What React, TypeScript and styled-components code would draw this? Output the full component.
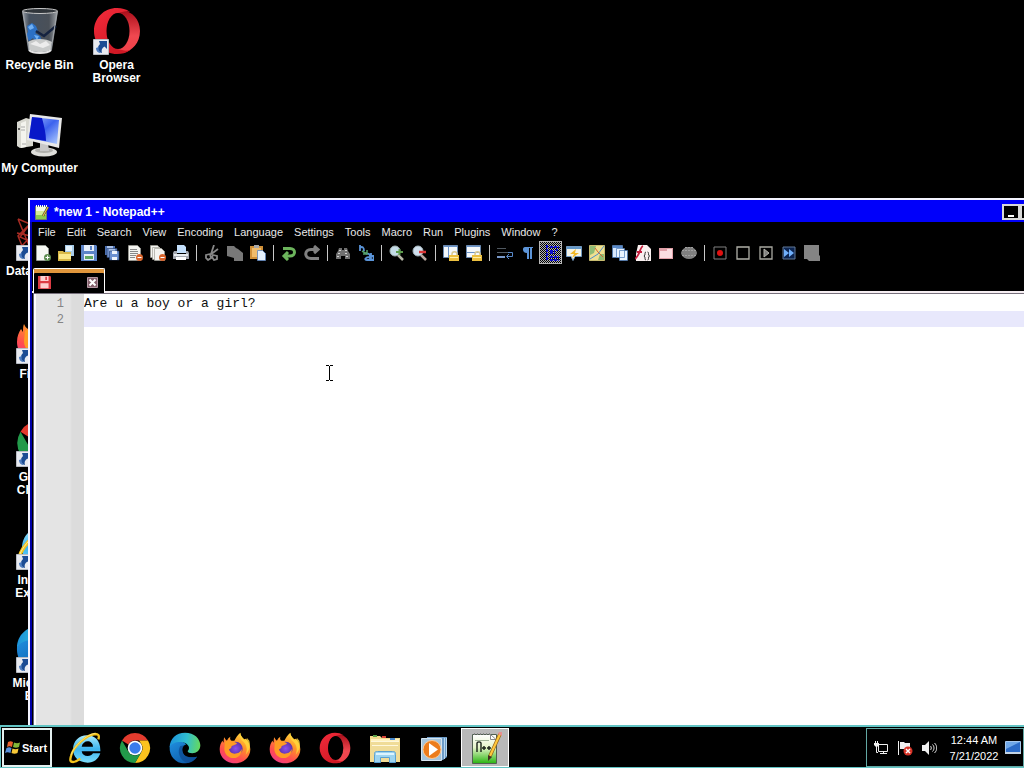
import React from "react";
import styled, { createGlobalStyle, css } from "styled-components";

const UI_FONT = '"Liberation Sans", Arial, sans-serif';
const MONO_FONT = '"Liberation Mono", "Courier New", monospace';

const GlobalStyle = createGlobalStyle`
  * { box-sizing: border-box; }
  body { margin: 0; background: #000; font-family: ${UI_FONT}; }
  button { font: inherit; color: inherit; background: none; border: 0; padding: 0; margin: 0; }
  svg { display: block; flex: none; }
`;

/* ---------- layout ---------- */

const Screen = styled.div`
  height: 100vh;
  display: flex;
  flex-direction: column;
  overflow: hidden;
  background: #000;
  color: #fff;
`;

const Desktop = styled.main`
  position: relative;
  flex: 1;
  min-height: 0;
  overflow: hidden;
`;

const IconGrid = styled.div`
  display: grid;
  grid-auto-flow: column;
  grid-template-rows: repeat(7, 103px);
  grid-auto-columns: 77px;
  padding-left: 1px;
`;

const Shortcut = styled.button<{ $start?: boolean }>`
  display: flex;
  flex-direction: column;
  align-items: center;
  justify-content: flex-start;
  gap: 4px;
  padding-top: 7px;
  font-size: 12px;
  line-height: 13px;
  font-weight: 700;
  white-space: pre;
  text-align: center;
  & > span:last-child {
    align-self: ${(p) => (p.$start ? "flex-start" : "center")};
    padding-left: ${(p) => (p.$start ? "5px" : "0")};
  }
`;

const Picture = styled.span`
  position: relative;
  width: 48px;
  height: 48px;
`;

const Overlay = styled.span`
  position: absolute;
  left: 0;
  bottom: 0;
`;

const Window = styled.section`
  position: absolute;
  left: 28px;
  top: 198px;
  right: -36px;
  bottom: 0;
  display: flex;
  flex-direction: column;
  background: #000;
  border-left: 2px solid #f4f4ff;
  border-top: 2px solid #f4f4ff;
  box-shadow: inset 2px 0 0 #0000a8;
  padding-left: 2px;
`;

const TitleBar = styled.header`
  display: flex;
  align-items: center;
  height: 22px;
  margin-left: -2px;
  padding: 2px 4px 0 4px;
  gap: 4px;
  background: #0000fa;
`;

const Title = styled.h1`
  flex: 1;
  margin: 0;
  font-size: 12px;
  line-height: 16px;
  font-weight: 700;
  white-space: pre;
`;

const Controls = styled.div`
  display: flex;
`;

const ControlButton = styled.button`
  width: 18px;
  height: 16px;
  background: #000;
  border: 2px solid #d8d8d8;
  display: flex;
  justify-content: center;
  align-items: flex-end;
`;

const MenuBar = styled.nav`
  display: flex;
  gap: 11px;
  height: 19px;
  padding-left: 6px;
  font-size: 11px;
  line-height: 20px;
  color: #e8e8e8;
`;

const ToolBar = styled.div`
  display: flex;
  align-items: center;
  height: 23px;
  margin-left: -1px;
`;

const Tool = styled.button<{ $pressed?: boolean }>`
  width: 23px;
  height: 23px;
  display: flex;
  align-items: center;
  justify-content: center;
  ${(p) =>
    p.$pressed &&
    css`
      border: 1px solid #b8b8b8;
      background: repeating-conic-gradient(#b4b4b4 0% 25%, #000 0% 50%) 0 0 / 2px 2px;
    `}
`;

const Separator = styled.span`
  width: 8px;
  height: 16px;
  display: flex;
  justify-content: center;
  &::before {
    content: "";
    width: 1px;
    background: #c8c8c8;
  }
`;

const TabStrip = styled.div`
  display: flex;
  align-items: flex-end;
  height: 29px;
  padding-left: 1px;
  border-bottom: 2px solid #f6eef2;
`;

const Tab = styled.div`
  width: 72px;
  height: 25px;
  margin-bottom: -2px;
  display: flex;
  align-items: center;
  justify-content: space-between;
  padding: 0 6px 0 4px;
  background: #000;
  border: solid #fff;
  border-width: 1px 1px 0;
  border-radius: 2px 2px 0 0;
  box-shadow: inset 0 4px 0 #e0963c;
  & svg { margin-top: 2px; }
`;

const Editor = styled.div`
  flex: 1;
  min-height: 0;
  display: flex;
  margin-left: 1px;
  border-top: 1px solid #77707c;
  border-left: 1px solid #606080;
  background: #fff;
  padding-left: 2px;
`;

const Gutter = styled.div`
  width: 48px;
  padding: 2px 20px 0 0;
  background: linear-gradient(90deg, #e4e4e4 0 34px, #dcdcdc 36px);
  color: #848484;
  font-family: ${MONO_FONT};
  font-size: 12px;
  line-height: 16px;
  text-align: right;
`;

const Code = styled.textarea`
  flex: 1;
  border: 0;
  outline: 0;
  resize: none;
  margin: 0;
  padding: 2px 0 0;
  background: linear-gradient(#e8e8fc, #e8e8fc) 0 17px / 100% 16px no-repeat #fff;
  color: #101010;
  font-family: ${MONO_FONT};
  font-size: 13px;
  line-height: 16px;
`;

const Pointer = styled.span`
  position: absolute;
  left: 325px;
  top: 365px;
`;

const TaskBar = styled.footer`
  display: flex;
  align-items: stretch;
  height: 43px;
  padding: 1px 0 0 1px;
  border: solid #62c4c4;
  border-width: 2px 0 1px 1px;
`;

const StartButton = styled.button`
  width: 50px;
  border: 2px solid #e4f0f0;
  display: flex;
  align-items: center;
  gap: 2px;
  padding-left: 1px;
  font-size: 11px;
  font-weight: 700;
`;

const Pinned = styled.div`
  display: flex;
  flex: 1;
  gap: 2px;
  padding-left: 9px;
`;

const TaskButton = styled.button<{ $active?: boolean }>`
  width: 48px;
  display: flex;
  align-items: center;
  justify-content: center;
  background: ${(p) => (p.$active ? "#b9b9b9" : "none")};
  border: ${(p) => (p.$active ? "1px solid #fff" : "0")};
`;

const Tray = styled.div`
  display: flex;
  align-items: center;
  gap: 8px;
  border: 1px solid #62a8a4;
  padding: 0 2px 0 6px;
`;

const Clock = styled.time`
  width: 54px;
  font-size: 11px;
  line-height: 16px;
  text-align: center;
  margin: 0 -4px 0 2px;
`;

/* ---------- large icons ---------- */

const HiddenDefs = styled.svg`
  position: absolute;
`;

const SharedGradients = () => (
  <HiddenDefs width="0" height="0" aria-hidden="true">
    <defs>
      <linearGradient id="opera" x1="0" y1="0" x2="0.6" y2="1">
        <stop offset="0" stopColor="#f42c3c" />
        <stop offset="1" stopColor="#d01824" />
      </linearGradient>
      <linearGradient id="operaIn" x1="0" y1="0" x2="0" y2="1">
        <stop offset="0" stopColor="#a80c18" />
        <stop offset="0.6" stopColor="#f04850" />
        <stop offset="1" stopColor="#f04048" />
      </linearGradient>
      <linearGradient id="glass" x1="0" y1="0" x2="1" y2="0">
        <stop offset="0" stopColor="#9aa0a8" />
        <stop offset="0.2" stopColor="#45505e" />
        <stop offset="0.75" stopColor="#4a5058" />
        <stop offset="1" stopColor="#a4a8ac" />
      </linearGradient>
      <linearGradient id="screen" x1="0" y1="0" x2="1" y2="1">
        <stop offset="0" stopColor="#a8c0ff" />
        <stop offset="0.5" stopColor="#3c62ee" />
        <stop offset="1" stopColor="#b4d0ff" />
      </linearGradient>
      <linearGradient id="ie" x1="0" y1="0" x2="0" y2="1">
        <stop offset="0" stopColor="#a8ecff" />
        <stop offset="0.5" stopColor="#3cb4ee" />
        <stop offset="1" stopColor="#7adcfa" />
      </linearGradient>
      <linearGradient id="edgeTop" x1="0" y1="0.3" x2="1" y2="0.4">
        <stop offset="0" stopColor="#1c92dc" />
        <stop offset="0.55" stopColor="#30bed0" />
        <stop offset="1" stopColor="#64d860" />
      </linearGradient>
      <linearGradient id="edgeLow" x1="0" y1="0" x2="0.8" y2="1">
        <stop offset="0" stopColor="#2090e0" />
        <stop offset="1" stopColor="#0c58a4" />
      </linearGradient>
      <linearGradient id="fox" x1="0.85" y1="0" x2="0.3" y2="1">
        <stop offset="0" stopColor="#ffe944" />
        <stop offset="0.4" stopColor="#ff9328" />
        <stop offset="0.75" stopColor="#ff4c50" />
        <stop offset="1" stopColor="#f03c80" />
      </linearGradient>
      <radialGradient id="globe">
        <stop offset="0" stopColor="#8a50f0" />
        <stop offset="1" stopColor="#5b30a8" />
      </radialGradient>
      <linearGradient id="npp" x1="0" y1="0" x2="0" y2="1">
        <stop offset="0" stopColor="#fff" />
        <stop offset="0.45" stopColor="#e4f4c8" />
        <stop offset="1" stopColor="#28b410" />
      </linearGradient>
    </defs>
  </HiddenDefs>
);

type Sized = { size: number };

const Opera = ({ size }: Sized) => (
  <svg width={size} height={size} viewBox="0 0 48 48">
    <path fill="url(#operaIn)" d="M30 3c9 2 17 9 17 21s-8 20-17 22l-10-4 12-6 4-12-4-12-12-6z" />
    <path fillRule="evenodd" fill="url(#opera)" d="M24 1C11 1 1 11 1 24s10 23 23 23c5 0 9-1 13-4-3 1-5 1-8 0-9-1-15-8-15-19S20 6 29 5c3-1 5-1 8 0-4-3-8-4-13-4z" />
    <ellipse cx="25" cy="24" rx="11.500" ry="18" fill="#000" />
  </svg>
);

const Chrome = ({ size }: Sized) => (
  <svg width={size} height={size} viewBox="0 0 48 48">
    <path fill="#e33b2e" d="M4.500 12.700A22.500 22.500 0 0 1 43.500 12.700H24a11.300 11.300 0 0 0-10 6z" />
    <path fill="#fcc31e" d="M43.500 12.700A22.500 22.500 0 0 1 24 46.500l9.800-16.900a11.300 11.300 0 0 0 0-11.300L30 12.700z" />
    <path fill="#229a4a" d="M24 46.500A22.500 22.500 0 0 1 4.500 12.700l9.700 16.900A11.300 11.300 0 0 0 28 34.600l5-3.500z" />
    <circle cx="24" cy="24" r="11" fill="#fff" />
    <circle cx="24" cy="24" r="8.500" fill="#3a7cec" />
  </svg>
);

const Edge = ({ size }: Sized) => (
  <svg width={size} height={size} viewBox="0 0 48 48">
    <path fill="url(#edgeLow)" d="M1 22C3 12 20 11 26 19c-4 0-7 4-6 9 1 8 9 12 22 9-4 6-11 10-19 10C10 47 0 36 1 22z" />
    <path fill="#0d4c94" d="M17 21c-5 7-2 21 10 25.500 6-.5 12-4 15-9.500-13 3-22-2-22-9 0-4 1-6 3-8z" opacity=".75" />
    <path fill="url(#edgeTop)" d="M1 23C1 10 11 1 24 1c14 0 23 9 23 19 0 8-6 12-12 12-4 0-7-1-7-3 0-1 2-2 2-5 0-5-6-9-13-9C9 15 3 18 1 23z" />
  </svg>
);

const Firefox = ({ size }: Sized) => (
  <svg width={size} height={size} viewBox="0 0 48 48">
    <path fill="url(#fox)" d="M8 8c1 2 2 4 4 5 1-3 3-5 5-6-1 3 0 5 2 6h4c2-4 5-9 9-12 0 4 3 7 6 10l2-1c4 4 7 10 7 16 0 12-10 21-23 21S1 38 1 26c0-6 2-10 4-13 1 1 1 2 2 3 0-3 0-6 1-8z" />
    <circle cx="25" cy="25" r="10.500" fill="url(#globe)" />
    <path fill="#ff9c24" d="M9 15c3-3 8-3 12 0 3 0 5 1 6 2-1 2-5 3-8 4 0 3-2 4-4 5 1 5 6 8 12 6 4-1 6-4 7-7 1 8-5 14-12 14-8 0-14-6-14-14z" />
    <path fill="#ffd83c" d="M32 1c-2 5 0 9 4 13 6 6 7 13 4 20 6-6 8-15 5-22-1 0-2-2-3-3l-2 4c-4-3-8-7-8-12z" opacity=".8" />
  </svg>
);

const Explorer = ({ size }: Sized) => (
  <svg width={size} height={size} viewBox="0 0 48 48">
    <path fillRule="evenodd" fill="url(#ie)" d="M27 5c12 0 20 8 20 22v2H19c1 5 4 7 9 7 4 0 6-1 8-4h11c-3 9-10 14-19 14C15 46 6 38 6 26S15 5 27 5zM19 22h17c0-5-4-8-8-8s-8 3-9 8z" />
    <path fill="none" stroke="#f4c41c" strokeWidth="3.500" d="M44 11c2-6 0-8-5-8C27 4 6 22 3 36c-2 7-1 9 3 9 3 0 7-2 11-5" />
    <path fill="none" stroke="#fff0a0" strokeWidth="1" d="M40 2C28 2 6 22 3 35" />
  </svg>
);

const RecycleBin = () => (
  <svg width="48" height="48" viewBox="0 0 48 48">
    <path fill="url(#glass)" d="M6 4h36l-6 39c-1 3-21 4-24 0z" />
    <path fill="#2c70c4" d="M11 19l5-3 4 3 2 5-3 2 5 3 2 5-6 2-3-5-4 3-3-6 2-3z" />
    <path stroke="#152340" strokeWidth="2.500" d="M40 19 28 29l-8-5" fill="none" />
    <path fill="#6fb0f4" d="m12 20 4-3 2 4-4 2zM18 28l5 1-2 4z" />
    <path fill="#c8caca" d="M12 35c5-4 18-4 24 0l-1 7c-2 4-20 4-22 0z" />
    <path fill="#ececec" d="m14 37 6-3 4 3 6-3 4 4-7 3z" />
    <path fill="none" stroke="#a0a4a8" d="m7 5 6 38M41 5l-6 38" />
    <ellipse cx="24" cy="4" rx="17.500" ry="2.500" fill="#30353a" stroke="#c8c8c8" />
    <path fill="none" stroke="#e4e4e4" strokeWidth="2" d="M13 43c4 4 18 4 22 0" />
  </svg>
);

const Computer = () => (
  <svg width="48" height="48" viewBox="0 0 48 48">
    <path fill="#d8d8d0" d="m1 12 9-4 7 2v26L4 38 1 36z" />
    <path fill="#f4f4ee" d="m5 13 5-2v26l-5 1z" />
    <path stroke="#aaa" d="M5 17h4M5 20h4M6 34h4" />
    <circle cx="3" cy="19" r="1" fill="#333" />
    <ellipse cx="28" cy="42" rx="13" ry="4.500" fill="#dededa" />
    <ellipse cx="28" cy="40.500" rx="9" ry="2.500" fill="#b0b0ac" />
    <path fill="#c8c8c8" d="m24 32 8 1 1 8h-9z" />
    <path fill="#e8e8e8" d="m14 4 32 4-3 30-32-8z" />
    <path fill="url(#screen)" d="m16 7 27 3-2 24-28-6z" />
    <path fill="#0818c8" d="m16 7 10 1c2 8 4 15 4 23l-17-3z" />
  </svg>
);

const Web = () => (
  <svg width="48" height="48" viewBox="0 0 48 48">
    <path fill="none" stroke="#a82c24" strokeWidth="1.500" d="M2 6l12 5 22-8 8 20-7 20-28-3-7-17L14 11l3 27M2 6l12 29M14 11 4 24l20 9 20-10M1 20l14 3L4 35" />
  </svg>
);

const ShortcutArrow = () => (
  <svg width="16" height="16" viewBox="0 0 16 16">
    <path fill="#e8eaf0" stroke="#b8bcc4" d="M.5.500h15v15H.500z" />
    <path fill="#1c4c94" d="M6 2h8v8l-2.500-2.500C9 9 8 11 9 14c-4-1-6-5-2-9z" />
    <path fill="#4d7cc0" d="M3 9c0 3 2 5 5 5-2-1-3-4-2-6z" />
  </svg>
);

const Folder = () => (
  <svg width="34" height="34" viewBox="0 0 34 34">
    <path fill="#f2dc90" d="M2 5h10l2 2h18v24H2z" />
    <path fill="#fff2c0" d="M3 8h28v21H3z" />
    <path fill="#58a048" d="M5 4h4v2H5z" />
    <path fill="#d84438" d="M14 5h4v2h-4z" />
    <path fill="#4888cc" d="M22 7h5v2h-5z" />
    <path fill="#f0dc98" d="M3 11h28v19H3z" />
    <path stroke="#fff8dc" d="M3 10.500h28M4 14.500h26" />
    <path fill="#9cd4f0" stroke="#5aa0d0" d="M6.500 31.500v-8c0-3 1-3 3-3h15c3 0 3 1 3 3v8h-6v-5h-9v5z" />
    <path fill="#dcf4ff" d="M8 22h18v2H8z" />
  </svg>
);

const MediaPlayer = () => (
  <svg width="34" height="34" viewBox="0 0 34 34">
    <path fill="#6d9cc8" d="M9 6h20v20l-4 3H9z" />
    <path stroke="#b8d8f0" d="M26.500 7v21M28.500 7v18" />
    <path fill="#a4c4dc" stroke="#d4e4f0" d="M3.500 7.500h20v22h-20z" />
    <circle cx="14" cy="18.500" r="9" fill="#ec7c1c" stroke="#ffc890" />
    <path fill="#fff" d="m11 12 9 6.500L11 25z" />
  </svg>
);

const NotepadPlus = ({ size }: Sized) => (
  <svg width={size} height={size} viewBox="0 0 34 34">
    <path fill="url(#npp)" stroke="#506050" d="M4.500 3.500h24v29h-24z" />
    <path fill="#fff" stroke="#888" d="M22.500 3.500 28 8.500h-5.500z" />
    <path stroke="#888" strokeDasharray="1 2" strokeWidth="2" d="M6 3h18" />
    <path stroke="#a0b498" d="M7 9.500h14" />
    <path fill="none" stroke="#182018" strokeWidth="1.400" d="M9 21v-9c0-1.500 4-1.500 4 0v9M14 17h4M16 15v4M19 17h4M21 15v4" />
    <path stroke="#8c5c14" strokeWidth="3.500" d="M32 3 22 25" />
    <path stroke="#ffc83c" strokeWidth="2.200" d="M32 3 22 25" />
    <path fill="#443020" d="m20 24 4 2-4 4z" />
    <path fill="#e89090" d="m30 3 1-2h3v4z" />
  </svg>
);

/* Title-bar sized page and pencil, simplified so it stays legible at 16px. */
const NotepadSmall = () => (
  <svg width="16" height="16" viewBox="0 0 16 16">
    <path fill="#f4f8e8" stroke="#708068" d="M1.500 2.500h11v13h-11z" />
    <path fill="#d4ec98" d="M2 7h10v4H2z" />
    <path fill="#8ccc50" d="M2 11h10v4H2z" />
    <path stroke="#fff" strokeDasharray="1 1" strokeWidth="2" d="M2 2h11" />
    <path stroke="#404838" strokeWidth="2.500" d="m14 3-5 9" />
    <path stroke="#f0c040" strokeWidth="1.200" d="m14 3-5 9" />
  </svg>
);

const WindowsFlag = () => (
  <svg width="15" height="16" viewBox="0 0 15 16">
    <path fill="#e8602c" d="M3 2c2-1 3-1 5 0L7 7C5 6 4 6 2 7z" />
    <path fill="#84b838" d="M9 2.500c2 1 4 1 6 0L14 7c-2 1-4 1-6 0z" />
    <path fill="#5890dc" d="M1.500 8c2-1 3-1 5 0l-1 5c-2-1-4-1-5.500 0z" />
    <path fill="#f6c838" d="M7.500 8.500c2 1 4 1 6 0l-1 4.500c-2 1-4 1-6 0z" />
  </svg>
);

/* ---------- toolbar icons ---------- */

const Disk = ({ fill = "#5c84c8", light = "#e8f0fa" }: { fill?: string; light?: string }) => (
  <>
    <path fill={fill} d="M0 0h15l1 1v15H0z" />
    <path fill={light} d="M3 0h10v6H3zM3 9h10v6H3z" />
    <path fill={fill} d="M9 1h2v4H9z" />
  </>
);

const Page = ({ x, y }: { x: number; y: number }) => (
  <path transform={`translate(${x} ${y})`} fill="#f4f4f0" stroke="#a0a098" strokeWidth=".7" d="M.5.500h7l3 3v9H.500z" />
);

const CloseMark = () => (
  <>
    <circle cx="12.500" cy="12.500" r="3.500" fill="#d8642c" />
    <path stroke="#fff" d="M10.500 12.500h4" />
  </>
);

const Lock = () => (
  <>
    <path fill="none" stroke="#d8c890" strokeWidth="1.500" d="M9 11V9c0-3 5-3 5 0v2" />
    <path fill="#ecc040" d="M6 10h10v6H6z" />
    <path fill="#fff0a8" d="M7 12h8v1H7z" />
  </>
);

const tools: Record<string, React.ReactNode> = {
  New: (
    <>
      <path fill="#f6f8f4" stroke="#a8b0a8" strokeWidth=".6" d="M1.500.500h9l3 3v12h-12z" />
      <circle cx="12.500" cy="12.500" r="3.500" fill="#5c8c50" />
      <path stroke="#fff" d="M10.500 12.500h4M12.500 10.500v4" />
    </>
  ),
  Open: (
    <>
      <path fill="#a8cce8" d="M7 0h9v11H7z" />
      <path fill="#e4f2fc" d="M8 1h6v5H8z" />
      <path fill="#d8b848" d="M0 6h5l1 1h7v9H0z" />
      <path fill="#fae88c" d="M1 9h12v5H1z" />
    </>
  ),
  Save: (
    <>
      <Disk />
      <path fill="#60a860" d="M4 11h8v3H4z" />
    </>
  ),
  "Save all": (
    <>
      <path fill="#4c70b0" d="M1 1h10v9H1z" />
      <path fill="#a8c0e8" d="M3 1h6v3H3z" />
      <path fill="#6c8cc8" stroke="#28406c" strokeWidth=".6" d="M3 3.500h10v9H3z" />
      <path fill="#a8c0e8" d="M5 4h6v3H5z" />
      <path fill="#6c90d0" stroke="#28406c" strokeWidth=".6" d="M5.500 6h9.500v9H5.500z" />
      <path fill="#f0f4fc" d="M8 6h5v3H8zM8 12h5v3H8z" />
    </>
  ),
  Close: (
    <>
      <path fill="#f4f4f0" stroke="#a8a8a0" strokeWidth=".6" d="M1.500.500h9l3 3v12h-12z" />
      <path stroke="#888" d="M3 4.500h7M3 6.500h8M3 8.500h8M3 10.500h6M3 12.500h5" />
      <CloseMark />
    </>
  ),
  "Close all": (
    <>
      <Page x={0} y={0} />
      <Page x={2} y={2} />
      <Page x={4} y={3} />
      <CloseMark />
    </>
  ),
  Print: (
    <>
      <path fill="#c4e0fc" d="M4 0h7l2 2v6H4z" />
      <path fill="#a4a8b0" d="M1 6h3v3h9V6h2l1 2v6H0V8z" />
      <path fill="#e8ecf0" d="M1 9h14v2H1z" />
      <path fill="#fff" d="M3 12h10v3H3z" />
    </>
  ),
  Cut: (
    <path fill="none" stroke="#888" strokeWidth="1.800" d="M10 0 7 9M14 4 6 10M2 10l4-1 1 4-3 2-2-2zM9 10l4 1v3l-3 1-2-3z" />
  ),
  Copy: <path fill="#787878" d="M0 1h7l2 2 2 1 5 4v8H7v-3L0 11z" />,
  Paste: (
    <>
      <path fill="#d09038" d="M0 1h13v13H0z" />
      <path fill="#f0bc6c" d="M2 3h9v9H2z" />
      <path fill="#a8a8a8" d="M4 0h5v3H4z" />
      <path fill="#e4f0fc" stroke="#5c84bc" strokeWidth=".8" d="M7.500 5.500h5l3 3v7h-8z" />
    </>
  ),
  Undo: <path fill="none" stroke="#6cb45c" strokeWidth="3" d="M2 3.500h7c6 0 6 7.500 0 7.500H5M7 7 3 11l4 4" />,
  Redo: <path fill="none" stroke="#808080" strokeWidth="3" d="M14 4.500H7c-7 0-7 9 0 9h8M10 1l4 3.500L10 8" />,
  Find: (
    <>
      <path fill="#707070" d="M4 3h3v2h2V3h3l1 3 2 3v5h-5v-3H6v3H1V9l2-3z" />
      <path stroke="#d0d0d0" strokeDasharray="2 1" d="M3 8.500h3M10 8.500h3M4 5.500h2M10 5.500h2M2 11.500h3M11 11.500h3" />
    </>
  ),
  Replace: (
    <>
      <path fill="none" stroke="#5a94d8" strokeWidth="1.800" d="M2 0v6M2 3c2-2 4-1 4 3M8 9c2-1 4 0 4 2v4H9c-3 0-2-3 3-3M13 8v7h2.500v-4H13" />
      <path fill="none" stroke="#54a06c" strokeWidth="1.500" d="m4 6 5 3M9 5v4H5" />
    </>
  ),
  "Zoom in": (
    <>
      <path stroke="#b8b8a8" strokeWidth="2.500" d="m9 10 5 5" />
      <circle cx="6" cy="6" r="5" fill="#c4dce8" stroke="#a4b4b4" />
      <path stroke="#5c9c4c" strokeWidth="2" d="M7 7h7M10.500 4v6" />
    </>
  ),
  "Zoom out": (
    <>
      <path stroke="#b8a8a0" strokeWidth="2.500" d="m9 10 5 5" />
      <circle cx="6" cy="6" r="5" fill="#d0e0ee" stroke="#a4b4bc" />
      <path stroke="#dc3838" strokeWidth="2.500" d="M7 7h7" />
    </>
  ),
  "Sync vertical": (
    <>
      <path fill="#f4f8fc" stroke="#6888b0" d="M.5.500h14v12H.500z" />
      <path stroke="#6c94c8" d="M1 1.500h13M5.500 2v10" />
      <Lock />
    </>
  ),
  "Sync horizontal": (
    <>
      <path fill="#f4f8fc" stroke="#6888b0" d="M.5.500h14v12H.500z" />
      <path stroke="#6c94c8" d="M1 1.500h13M1 7.500h13" />
      <Lock />
    </>
  ),
  "Word wrap": (
    <>
      <path stroke="#505860" d="M0 3.500h9M0 7.500h11" />
      <path stroke="#7898c8" strokeWidth="2" d="M0 12h8" />
      <path fill="none" stroke="#5888c8" d="M11 7.500h4.500v4H10M12 9l-2.500 2.500L12 14" />
    </>
  ),
  "Show all": <path fill="#5c94d8" d="M5 2h8v1h-1v11h-2V3H9v11H7V8C2 8 2 2 5 2z" />,
  Indent: <path fill="none" stroke="#0c0cd0" strokeWidth="2" strokeDasharray="3 1" d="M4 0v16M7 2h9M7 6h5M7 8h5M7 12h9M7 15h9M14 4v2" />,
  Language: (
    <>
      <path fill="#f4f4e8" stroke="#7098c0" d="M.5 1.500h15v10H9l-2 4-2-4H.500z" />
      <path fill="#6498c8" d="M1 2h14v2H1z" />
      <path fill="#f0b828" d="m10 4-6 5h4l-2 4 7-5H9z" />
    </>
  ),
  Map: (
    <>
      <path fill="#f0e090" stroke="#c8bc70" d="M.5.500h15v15H.500z" />
      <path fill="#90bc74" d="M1 1h6L5 8l-4 2zM11 9h4v6H9z" />
      <path fill="none" stroke="#5090c8" d="m1 14 8-5 6-8" />
      <path fill="none" stroke="#d06434" d="m6 3 3 4 5 5" />
    </>
  ),
  "Doc list": (
    <>
      <path fill="#d8e8fc" stroke="#4878b8" strokeWidth=".7" d="M.5.500h10v12H.500z" />
      <path fill="#5888c8" d="M1 1h9v2H1z" />
      <path fill="#eaf4ff" stroke="#4878b8" strokeWidth=".7" d="M4.500 3.500h8v9h-8zM7.500 5.500h8v10h-8z" />
    </>
  ),
  Functions: (
    <>
      <path fill="#faf0f0" d="M3 0h9l4 4v12H1V9z" />
      <path fill="none" stroke="#c41c3c" strokeWidth="1.800" d="M8 1C5 2 5 10 0 14M2 7h5" />
      <path fill="none" stroke="#303030" d="M11 7c-2 0 0 3-2 4 2 1 0 4 2 4M12.500 7c2 0 0 3 2 4-2 1 0 4-2 4" />
    </>
  ),
  Workspace: (
    <>
      <path fill="#e0a0a8" d="M1 3h14v11H1z" />
      <path fill="#fadce0" d="M2 6h12v7H2zM9 4h5v2H9z" />
    </>
  ),
  Monitor: (
    <>
      <path fill="#808080" d="M0 8c1-4 4-6 8-6s7 2 8 6c-1 4-4 6-8 6S1 12 0 8z" />
      <path stroke="#a0a0a0" strokeDasharray="2 1" d="M1 5.500h14M1 10.500h14M4 2.500h8" />
    </>
  ),
  Record: (
    <>
      <path fill="none" stroke="#808080" d="M2 2h12v12H2z" />
      <circle cx="8" cy="8" r="3" fill="#e01010" />
    </>
  ),
  Stop: <path fill="none" stroke="#b0b0a8" strokeWidth="1.300" d="M2 2h12v12H2z" />,
  Play: (
    <>
      <path fill="none" stroke="#a8a8a0" strokeWidth="1.300" d="M2 2h12v12H2z" />
      <path fill="#808080" stroke="#b0b0a8" d="M6 4v8l5-4z" />
    </>
  ),
  "Play many": (
    <>
      <path fill="#0c2450" stroke="#607898" d="M2 2h12v12H2z" />
      <path fill="#70b0fc" d="M3 4v8l5-4zM8 4v8l5-4z" />
    </>
  ),
  "Save macro": <path fill="#848484" d="M0 0h15v10l1 1v5H5l-2-2H0z" />,
};

const toolGroups = [
  ["New", "Open", "Save", "Save all", "Close", "Close all", "Print"],
  ["Cut", "Copy", "Paste"],
  ["Undo", "Redo"],
  ["Find", "Replace"],
  ["Zoom in", "Zoom out"],
  ["Sync vertical", "Sync horizontal"],
  ["Word wrap", "Show all", "Indent", "Language", "Map", "Doc list", "Functions", "Workspace", "Monitor"],
  ["Record", "Stop", "Play", "Play many", "Save macro"],
];

const menus = ["File", "Edit", "Search", "View", "Encoding", "Language", "Settings", "Tools", "Macro", "Run", "Plugins", "Window", "?"];

const shortcuts = [
  { label: "Recycle Bin", icon: <RecycleBin />, link: false },
  { label: "My Computer", icon: <Computer />, link: false },
  { label: "Data", icon: <Web />, link: true, start: true },
  { label: "Firefox", icon: <Firefox size={48} />, link: true },
  { label: "Google\nChrome", icon: <Chrome size={48} />, link: true },
  { label: "Internet\nExplorer", icon: <Explorer size={48} />, link: true },
  { label: "Microsoft\nEdge", icon: <Edge size={48} />, link: true },
  { label: "Opera\nBrowser", icon: <Opera size={48} />, link: true },
];

const pinned = [
  { name: "Internet Explorer", icon: <Explorer size={32} /> },
  { name: "Google Chrome", icon: <Chrome size={32} /> },
  { name: "Microsoft Edge", icon: <Edge size={32} /> },
  { name: "Firefox", icon: <Firefox size={32} /> },
  { name: "Firefox Private", icon: <Firefox size={32} /> },
  { name: "Opera", icon: <Opera size={32} /> },
  { name: "File Explorer", icon: <Folder /> },
  { name: "Media Player", icon: <MediaPlayer /> },
  { name: "Notepad++", icon: <NotepadPlus size={34} />, active: true },
];

export default function App() {
  return (
    <Screen>
      <GlobalStyle />
      <SharedGradients />
      <Desktop>
        <IconGrid>
          {shortcuts.map((s) => (
            <Shortcut key={s.label} $start={s.start}>
              <Picture>
                {s.icon}
                {s.link && <Overlay><ShortcutArrow /></Overlay>}
              </Picture>
              <span>{s.label}</span>
            </Shortcut>
          ))}
        </IconGrid>

        <Window>
          <TitleBar>
            <NotepadSmall />
            <Title>*new 1 - Notepad++</Title>
            <Controls>
              <ControlButton aria-label="Minimize">
                <svg width="12" height="10" viewBox="0 0 12 10"><path fill="#fff" d="M3 7h6v2H3z" /></svg>
              </ControlButton>
              <ControlButton aria-label="Maximize">
                <svg width="12" height="10" viewBox="0 0 12 10"><path fill="none" stroke="#fff" d="M1.500 1.500h9v7h-9z" /></svg>
              </ControlButton>
              <ControlButton aria-label="Close window">
                <svg width="12" height="10" viewBox="0 0 12 10"><path stroke="#fff" strokeWidth="2" d="m3 1 6 7M9 1 3 8" /></svg>
              </ControlButton>
            </Controls>
          </TitleBar>
          <MenuBar>
            {menus.map((m) => <button key={m}>{m}</button>)}
          </MenuBar>
          <ToolBar>
            {toolGroups.map((group, i) => (
              <React.Fragment key={group[0]}>
                {i > 0 && <Separator />}
                {group.map((name) => (
                  <Tool key={name} aria-label={name} $pressed={name === "Indent"}>
                    <svg width="16" height="16" viewBox="0 0 16 16">{tools[name]}</svg>
                  </Tool>
                ))}
              </React.Fragment>
            ))}
          </ToolBar>
          <TabStrip>
            <Tab>
              <svg width="13" height="13" viewBox="0 0 16 16"><Disk fill="#dc3c44" light="#fcd0d0" /></svg>
              <button aria-label="Close tab">
                <svg width="11" height="11" viewBox="0 0 11 11">
                  <path fill="#84606c" stroke="#b498a4" d="M.5.500h10v10H.500z" />
                  <path stroke="#fff" strokeWidth="2" d="m2.500 2.500 6 6M8.500 2.500l-6 6" />
                </svg>
              </button>
            </Tab>
          </TabStrip>
          <Editor>
            <Gutter>
              <div>1</div>
              <div>2</div>
            </Gutter>
            <Code aria-label="Document text" spellCheck={false} defaultValue={"Are u a boy or a girl?\n"} />
          </Editor>
        </Window>

        <Pointer>
          <svg width="9" height="16" viewBox="0 0 9 16">
            <path fill="none" stroke="#000" d="M1 .5h3M5 .5h3M4.500 1v14M1 15.500h3M5 15.500h3" />
          </svg>
        </Pointer>
      </Desktop>

      <TaskBar>
        <StartButton><WindowsFlag />Start</StartButton>
        <Pinned>
          {pinned.map((p) => (
            <TaskButton key={p.name} aria-label={p.name} $active={p.active}>{p.icon}</TaskButton>
          ))}
        </Pinned>
        <Tray>
          <svg width="16" height="16" viewBox="0 0 16 16">
            <path fill="none" stroke="#f0f0f0" d="M5.500 4.500h9v7h-9zM7 13.500h7M10.500 11.500v2M3.500 6v6.500H5" />
            <path fill="#f0f0f0" d="M1 3h5v2L4 7H3L1 5zM2 1h1v2H2zM4 1h1v2H4z" />
          </svg>
          <svg width="16" height="16" viewBox="0 0 16 16">
            <path fill="#f0f0f0" d="M1 1h1v14H1zM3 2h4l1 1h5v7H8L7 9H3z" />
            <circle cx="11" cy="11" r="4.500" fill="#d83428" />
            <path stroke="#fff" strokeWidth="1.500" d="m9 9 4 4M13 9l-4 4" />
          </svg>
          <svg width="16" height="16" viewBox="0 0 16 16">
            <path fill="#f0f0f0" d="M1 5h3l4-4v14l-4-4H1z" />
            <path fill="none" stroke="#e0e0e0" d="M9.500 6c1 1 1 3 0 4M11.500 4.500c2 2 2 5 0 7M13.500 3c3 3 3 7 0 10" />
          </svg>
          <Clock>12:44 AM<br />7/21/2022</Clock>
          <svg width="16" height="14" viewBox="0 0 16 14">
            <path fill="#2c6cc8" stroke="#a8c8ec" d="M.5.500h15v11H.500z" />
            <path fill="#70a8e8" d="M1 1h14L1 8z" />
            <path fill="#c4d4e4" d="M0 11h16v2H0z" />
          </svg>
        </Tray>
      </TaskBar>
    </Screen>
  );
}
